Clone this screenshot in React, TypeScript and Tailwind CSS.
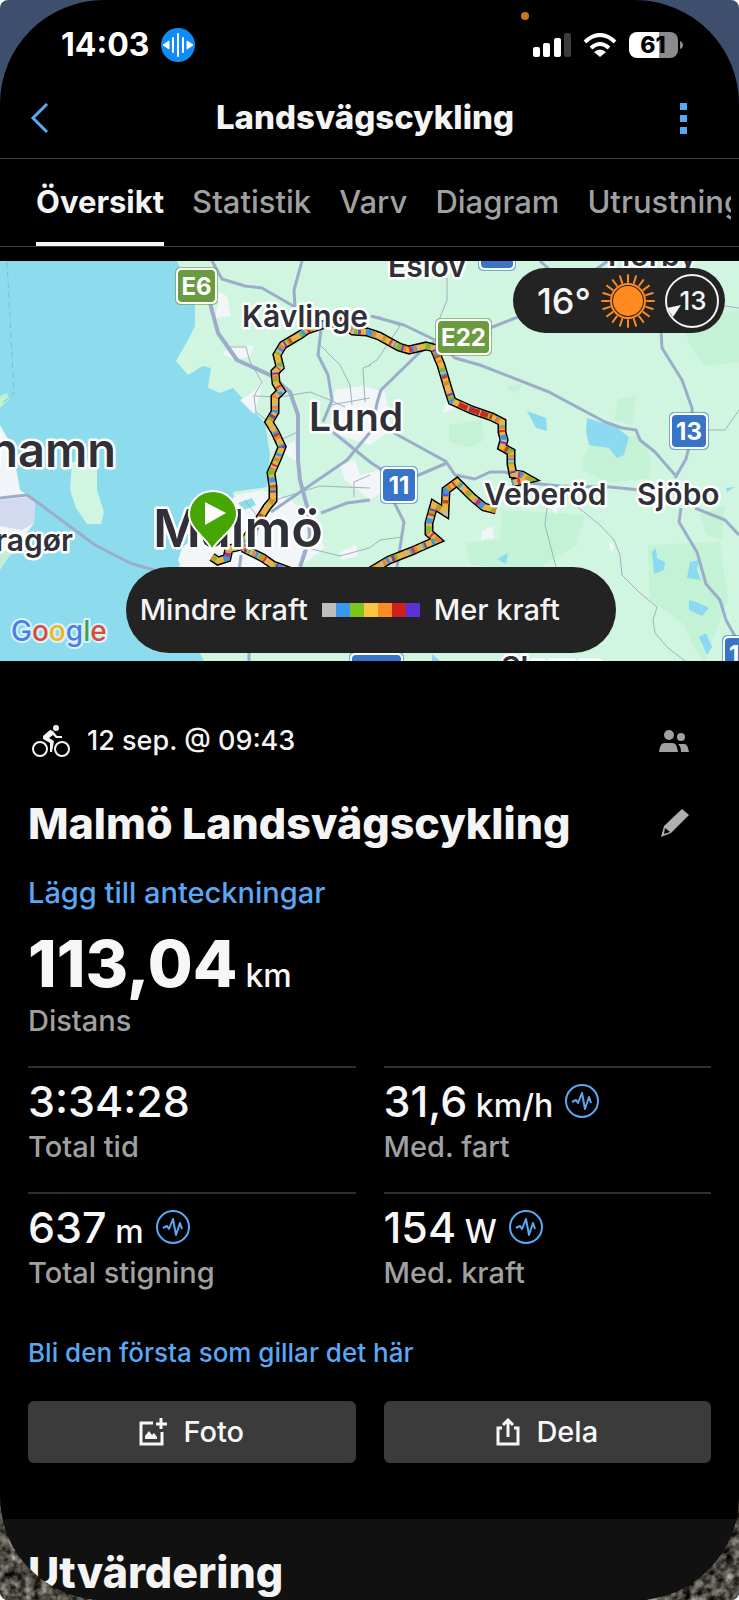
import type { ReactNode } from "react";

const ROUTE =
  "M212 557L218 561L227 558L229 549L241 546L262 515L267 507L273 500L273 487L271 473L278 457L282 447L275 432L269 422L275 412L275 397L281 391L276 383L275 372L280 367L277 355L283 345L300 335L307 330L322 325L340 322L353 331L367 332L379 336L399 347L409 350L426 346L434 348L441 365L449 392L452 401L472 410L492 417L502 422L502 432L504 440L502 447L511 452L511 464L513 474L522 475L529 479L512 483";
const ROUTE_SOUTH =
  "M496 510L484 507L472 497L457 482L446 490L445 512L434 505L429 523L429 533L437 540L421 547L412 551L389 560L372 570L340 590L273 565L263 558L243 548";

/* Each layer paints its own dashes so the line reads as mixed power zones */
const POWER_LAYERS = [
  { color: "#e9b33d", dash: "none", offset: 0 },
  { color: "#7cba35", dash: "5 9 3 13", offset: 0 },
  { color: "#3f93e8", dash: "3 17 6 23", offset: 7 },
  { color: "#f07f2a", dash: "3 8 2 21", offset: 11 },
  { color: "#d6352c", dash: "2 19 3 31", offset: 3 },
  { color: "#c3b8ae", dash: "2 15 2 24", offset: 19 },
  { color: "#6a3fd0", dash: "2 33 2 45", offset: 15 },
];

const TABS = ["Översikt", "Statistik", "Varv", "Diagram", "Utrustning"];

const LEGEND = ["bg-[#bdbdc0]", "bg-[#3b97ee]", "bg-[#7bc51c]", "bg-[#fbc63f]", "bg-[#fb8b24]", "bg-[#cf2020]", "bg-[#5c30d2]"];

interface ShieldProps {
  x: number;
  y: number;
  w: number;
  h: number;
  label: string;
  fill?: string;
}

function Shield({ x, y, w, h, label, fill = "#3874c8" }: ShieldProps) {
  return (
    <g>
      <rect x={x - 1} y={y - 1} width={w + 2} height={h + 2} rx="5" fill={fill} opacity="0.6" />
      <rect x={x} y={y} width={w} height={h} rx="5" fill="#fff" />
      <rect x={x + 2} y={y + 2} width={w - 4} height={h - 4} rx="4" fill={fill} />
      <text x={x + w / 2} y={y + h / 2 + 9} textAnchor="middle" fontSize="24" fontWeight="700" fill="#fff">
        {label}
      </text>
    </g>
  );
}

function RouteMap() {
  return (
    <svg
      viewBox="0 261 739 400"
      preserveAspectRatio="xMidYMid slice"
      className="block h-[400px] w-full"
      role="img"
      aria-label="Karta över rutten"
    >
      <rect y="261" width="739" height="400" fill="#8ddced" />

      {/* Land */}
      <path
        d="M177 261L195 300L195 326L188 340L176 361L188 375L203 366L211 368L208 388L220 393L233 388L265 423L270 455L267 487L233 492L236 510L205 530L190 542L180 563L165 600L200 653L204 661H739V261Z"
        fill="#d0f5e0"
      />
      <path d="M72 462L97 458L97 490L104 512L101 524L87 524L76 508L70 490Z" fill="#d0f5e0" />
      <path d="M0 396L7 393L9 399L0 408ZM0 545L20 545L8 558L0 570Z" fill="#c3f0d5" />
      <path d="M0 425L12 446L20 490L35 500L34 523L26 534L24 548L0 552Z" fill="#f1f4f8" />
      <path d="M0 500L30 497L35 502L34 523L22 530L0 526Z" fill="#d3d9ee" />
      <path d="M7 262L14 394L2 403" fill="none" stroke="#76c3d8" strokeDasharray="6 4" />

      {/* Forest */}
      <g fill="#c4f2d7">
        <path d="M582 460L590 445L640 435L652 460L648 478L610 483L583 470Z" />
        <path d="M502 510L585 515L576 545L535 570L470 565L466 543L500 540Z" />
        <path d="M648 545L720 542L728 600L704 661L690 640L685 625L650 600Z" />
        <path d="M449 425L482 420L484 440L470 447L450 442Z" />
        <path d="M680 320L739 310V362L705 366L690 345Z" />
        <path d="M617 400L636 395L632 425L615 420ZM508 386L522 384L518 393L508 391Z" />
        <path d="M700 515L725 505L722 540L706 535Z" />
      </g>

      {/* Built-up areas */}
      <g fill="#f2f6f8">
        <path d="M182 548L212 520L236 495L262 490L290 500L318 520L324 548L300 567L182 567L178 560Z" />
        <path d="M218 291L227 296L231 316L215 318L218 304ZM232 346L254 346L250 356L236 360L222 354Z" />
        <path d="M335 390L362 386L385 392L392 430L370 445L330 432Z" />
        <path d="M240 400L256 390L263 378L260 395L254 414ZM288 444L295 440L296 461L285 455Z" />
        <path d="M442 413L450 396L466 402L452 410ZM482 531L492 526L494 538L481 540Z" />
        <path d="M340 466L355 460L360 475L380 470L382 492L370 500L345 480Z" />
        <path d="M340 552L356 545L358 556L342 560ZM548 505L560 505L556 514ZM608 541L614 545L612 553Z" />
      </g>
      <path d="M238 503L252 498L256 505L244 510Z" fill="#8ddced" />

      {/* Lakes */}
      <g fill="#8bdaf2">
        <path d="M527 411L546 418L547 431L536 428Z" />
        <path d="M587 418L616 427L629 437L624 455L617 458L609 448L589 445L586 432Z" />
        <path d="M656 548L657 558L665 562L664 570L654 574L652 552Z" />
        <path d="M690 562L699 560L697 570L701 580L687 578Z" />
        <path d="M689 600L699 603L709 608L702 616L689 610Z" />
        <path d="M699 637L706 633L712 647L707 655Z" />
        <path d="M497 559L508 553L506 564ZM432 654L440 661H432ZM726 488L735 487L727 492Z" />
      </g>

      {/* Minor roads */}
      <g fill="none" stroke="#a3b0bf" strokeWidth="1">
        <path d="M230 347L246 347L250 362L262 382L254 396L256 412L266 420M254 396L280 397L310 392L330 400L345 407" />
        <path d="M320 345L340 365L350 385L352 405M371 365L363 368L365 402M330 405L370 398" />
        <path d="M447 278L447 300L439 320M378 316L400 326L377 360L369 365" />
        <path d="M547 508L545 525L556 567M575 505L600 525L614 540L620 555L622 575L640 593L657 607L653 620L655 633L668 648L685 661" />
        <path d="M700 430L725 430L739 410M725 306L739 308M369 548L380 540L402 537M275 500L320 486L370 488" />
        <path d="M354 497L354 482L370 475M280 440L298 432M308 548L340 556L369 548M245 500L260 520L255 545" />
      </g>

      {/* Main roads */}
      <g fill="none" stroke="#9badca" strokeWidth="3" strokeLinejoin="round">
        <path d="M212 261L222 279L245 286L262 288L295 307M302 261L294 290L295 307" />
        <path d="M210 303L218 333L237 360L270 375L290 392L298 415L298 460L300 480L308 510L310 537L300 567" strokeWidth="4" />
        <path d="M321 330L318 355L328 375L332 400L323 422" />
        <path d="M271 512L347 460L372 430L377 403L381 390L420 352L434 342" />
        <path d="M333 432L370 462L385 472M394 433L447 462" />
        <path d="M371 316L404 325L435 340L455 358L480 365L549 392L605 422L622 428L636 430L640 440L655 452L675 475" />
        <path d="M661 330L662 348L682 380L692 408L693 430L686 459L675 478" />
        <path d="M400 483L447 463L455 475L475 479L490 472L505 472L530 483L560 486L610 487L640 490" />
        <path d="M321 513L347 503L370 500M393 500L404 522L397 567" />
        <path d="M681 508L679 522L697 552L706 584L720 600L726 620L737 640M695 508L725 520L739 535" />
        <path d="M490 328L518 317M540 261L550 270M592 272L608 261" />
        <path d="M0 498L27 495L37 502L95 545L130 563L160 572M241 555L238 580M249 650L249 661" />
      </g>

      {/* Recorded route */}
      {[ROUTE, ROUTE_SOUTH].map((d) => (
        <g key={d} fill="none" strokeLinejoin="miter" strokeMiterlimit="3">
          <path d={d} stroke="#000" strokeWidth="9" />
          {POWER_LAYERS.map((layer) => (
            <path
              key={layer.color}
              d={d}
              stroke={layer.color}
              strokeWidth="6"
              strokeDasharray={layer.dash}
              strokeDashoffset={layer.offset}
            />
          ))}
        </g>
      ))}
      <path d="M460 405L472 410L492 417" fill="none" stroke="#c92820" strokeWidth="5" strokeDasharray="8 2 11 1" />

      {/* Place names */}
      <g fill="#303138" stroke="#fff" strokeWidth="5" strokeLinejoin="round" paintOrder="stroke" fontWeight="600" fontSize="30">
        <text x="242" y="327">Kävlinge</text>
        <text x="388" y="277">Eslöv</text>
        <text x="608" y="266">Hörby</text>
        <text x="484" y="505">Veberöd</text>
        <text x="637" y="505">Sjöbo</text>
        <text x="501" y="678">Skurup</text>
        <text x="73" y="551" textAnchor="end">Dragør</text>
        <text x="309" y="431" fontSize="39">Lund</text>
        <text x="116" y="467" fontSize="47" textAnchor="end">hamn</text>
        <text x="153" y="547" fontSize="52">Malmö</text>
      </g>

      <Shield x={176} y={268} w={41} h={36} label="E6" fill="#6a9b41" />
      <Shield x={436} y={319} w={55} h={36} label="E22" fill="#6a9b41" />
      <Shield x={670} y={413} w={38} h={36} label="13" />
      <Shield x={381} y={467} w={36} h={36} label="11" />
      <Shield x={479} y={234} w={36} h={36} label="17" />
      <Shield x={350} y={653} w={53} h={36} label="108" />
      <Shield x={723} y={636} w={38} h={36} label="19" />

      {/* Start marker */}
      <path
        d="M212 550C208 539 189 529 189 514A24 23 0 0 1 237 514C237 529 217 539 212 550Z"
        fill="#46a704"
        stroke="#fff"
        strokeWidth="2"
      />
      <path d="M205 502L226 513L205 525Z" fill="#fff" />

      {/* Map provider */}
      <text
        x="11"
        y="641"
        fontSize="28"
        fontWeight="500"
        stroke="#d9f3f9"
        strokeWidth="4"
        strokeLinejoin="round"
        paintOrder="stroke"
      >
        <tspan fill="#4a7fea">G</tspan>
        <tspan fill="#dc4a3e">o</tspan>
        <tspan fill="#f0b51f">o</tspan>
        <tspan fill="#4a7fea">g</tspan>
        <tspan fill="#38a455">l</tspan>
        <tspan fill="#dc4a3e">e</tspan>
      </text>
    </svg>
  );
}

function SunIcon() {
  const rays = Array.from({ length: 20 }, (_, i) => i * 18);
  return (
    <svg width="54" height="54" viewBox="-27 -27 54 54" aria-hidden="true">
      <circle r="15" fill="#ff8a1f" />
      <circle r="17" fill="none" stroke="#ff8a1f" strokeWidth="2" />
      {rays.map((deg) => (
        <path key={deg} d="M0 -19V-26" stroke="#ff8a1f" strokeWidth="2" strokeLinecap="round" transform={`rotate(${deg})`} />
      ))}
    </svg>
  );
}

function WindIcon() {
  return (
    <svg width="54" height="54" viewBox="0 0 54 54" aria-label="Vind 13">
      <circle cx="27" cy="27" r="26" fill="none" stroke="#f4f4f4" strokeWidth="2" />
      <path d="M2 34L16 31L8 43Z" fill="#f4f4f4" />
      <text x="28" y="36" textAnchor="middle" fontSize="26" fontWeight="500" fill="#f4f4f4">
        13
      </text>
    </svg>
  );
}

function BikeIcon() {
  return (
    <svg width="38" height="34" viewBox="0 0 38 34" fill="none" stroke="#f4f4f4" aria-hidden="true">
      <circle cx="8" cy="25" r="7" strokeWidth="2" />
      <circle cx="30" cy="25" r="7" strokeWidth="2" />
      <circle cx="24" cy="4" r="3" fill="#f4f4f4" stroke="none" />
      <path d="M18 6L11 12L11 15L18 19V28H20L22 17L17 14L21 11L24 14H30V12H25L21 7Z" fill="#f4f4f4" stroke="none" />
    </svg>
  );
}

function InsightIcon() {
  return (
    <svg width="34" height="34" viewBox="0 0 34 34" fill="none" stroke="#5aa7f4" strokeWidth="2" aria-hidden="true">
      <circle cx="17" cy="17" r="16" />
      <path d="M7 18L11 16L13 19L17 9L20 25L24 13L26 19" strokeLinejoin="round" />
    </svg>
  );
}

interface StatProps {
  value: string;
  unit?: string;
  label: string;
  insight?: boolean;
}

function Stat({ value, unit, label, insight }: StatProps) {
  return (
    <div className="border-t-2 border-[#303030] pt-[9px] pb-[27px]">
      <div className="flex h-12 items-center gap-3">
        <p className="text-[43px] leading-[48px] font-medium text-[#f7f7f7]">
          {value}
          {unit && <span className="text-[32px] leading-none"> {unit}</span>}
        </p>
        {insight && <InsightIcon />}
      </div>
      <p className="mt-1 text-[29px] leading-9 font-medium text-[#a0a0a0]">{label}</p>
    </div>
  );
}

function ActionButton({ icon, children }: { icon: ReactNode; children: ReactNode }) {
  return (
    <button
      type="button"
      className="flex h-[62px] items-center justify-center gap-4 rounded-md bg-[#3b3b3b] text-[29px] font-medium text-[#f7f7f7]"
    >
      {icon}
      {children}
    </button>
  );
}

function StatusBar() {
  return (
    <div className="relative flex h-[78px] items-center justify-between pt-[11px] pr-[56px] pl-[61px]">
      <div className="flex items-center gap-3">
        <span className="text-[32px] font-bold text-white">14:03</span>
        <svg width="34" height="34" viewBox="0 0 34 34" aria-hidden="true">
          <circle cx="17" cy="17" r="17" fill="#0f8cf8" />
          <path d="M17 6V28M12 10V24M22 10V24" stroke="#fff" strokeWidth="2" strokeLinecap="round" />
          <path d="M2 17L8 13V21ZM32 17L26 13V21Z" fill="#fff" stroke="#fff" strokeLinejoin="round" />
        </svg>
      </div>
      <span className="absolute top-3 left-[71%] size-2 -translate-x-1 rounded-full bg-[#c97528]" />
      <div className="flex items-center gap-3">
        <svg width="38" height="24" viewBox="0 0 38 24" fill="#fff" aria-hidden="true">
          <rect y="14" width="7" height="10" rx="2" />
          <rect x="10" y="10" width="7" height="14" rx="2" />
          <rect x="21" y="5" width="7" height="19" rx="2" />
          <rect x="31" width="7" height="24" rx="2" fill="#3b3b3b" />
        </svg>
        <svg width="34" height="24" viewBox="0 0 34 24" fill="none" stroke="#fff" strokeWidth="4" aria-hidden="true">
          <path d="M2 9Q17 -5 32 9" />
          <path d="M8 15Q17 7 26 15" />
          <path d="M17 24L11 19Q17 14 23 19Z" fill="#fff" stroke="none" />
        </svg>
        <svg width="54" height="26" viewBox="0 0 54 26" aria-label="Batteri 61 %">
          <path d="M30 0H41A8 8 0 0 1 49 8V18A8 8 0 0 1 41 26H30Z" fill="#8b8b8b" />
          <path d="M30 0H8A8 8 0 0 0 0 8V18A8 8 0 0 0 8 26H30Z" fill="#fff" />
          <path d="M51 9Q54 10 54 13T51 17Z" fill="#8b8b8b" />
          <text x="24" y="21" textAnchor="middle" fontSize="23" fontWeight="800" fill="#000">
            61
          </text>
        </svg>
      </div>
    </div>
  );
}

export default function App() {
  return (
    <div className="bg-white font-[Inter,sans-serif]">
      <div className="relative min-h-screen overflow-hidden rounded-lg bg-[#3e4f6e]">
        {/* Gravel wallpaper behind the lower corners */}
        <svg className="absolute bottom-0 left-0 h-[170px] w-full" aria-hidden="true">
          <filter id="gravel" colorInterpolationFilters="sRGB">
            <feTurbulence type="fractalNoise" baseFrequency="0.12" numOctaves="3" seed="4" />
            <feColorMatrix values="1 0 0 0 -0.2  1 0 0 0 -0.21  1 0 0 0 -0.24  0 0 0 0 1" />
          </filter>
          <rect width="100%" height="100%" filter="url(#gravel)" />
        </svg>

        <div className="relative flex min-h-screen flex-col overflow-hidden rounded-[104px] bg-black">
          <StatusBar />

          <header className="flex h-[81px] items-center justify-between border-b border-[#3c3c3c] pr-[52px] pl-[30px]">
            <button type="button" aria-label="Tillbaka">
              <svg width="20" height="30" viewBox="0 0 20 30" fill="none" stroke="#5aa7f4" strokeWidth="3">
                <path d="M17 1L3 15L17 29" />
              </svg>
            </button>
            <h1 className="text-[33px] font-extrabold text-[#f4f4f4]">Landsvägscykling</h1>
            <button type="button" aria-label="Fler alternativ" className="flex flex-col gap-[5px]">
              <span className="size-[7px] bg-[#5aa7f4]" />
              <span className="size-[7px] bg-[#5aa7f4]" />
              <span className="size-[7px] bg-[#5aa7f4]" />
            </button>
          </header>

          <nav className="border-b border-[#3c3c3c] pr-2 pl-9">
            <div className="flex h-[87px] gap-7 overflow-hidden">
              {TABS.map((tab, index) => (
                <a
                  key={tab}
                  href="#"
                  className={
                    index === 0
                      ? "flex shrink-0 items-center border-b-4 border-[#f4f4f4] pt-1 text-[31px] font-bold text-[#f4f4f4]"
                      : "flex shrink-0 items-center border-b-4 border-transparent pt-1 text-[31px] font-medium text-[#a0a0a0]"
                  }
                >
                  {tab}
                </a>
              ))}
            </div>
          </nav>

          <section className="relative mt-[14px]">
            <RouteMap />
            <div className="absolute top-[7px] right-[14px] flex h-[65px] items-center rounded-full bg-[#232323] pr-[6px] pl-6 text-[#f4f4f4]">
              <span className="text-[36px] font-medium">16°</span>
              <span className="mr-[10px] ml-[10px]">
                <SunIcon />
              </span>
              <WindIcon />
            </div>
            <div className="absolute bottom-2 left-[17%] flex h-[86px] items-center gap-[14px] rounded-full bg-[#232323] pr-[56px] pl-[14px] text-[29px] font-medium text-[#f4f4f4]">
              <span>Mindre kraft</span>
              <span className="flex">
                {LEGEND.map((color) => (
                  <span key={color} className={`h-[14px] w-[14px] ${color}`} />
                ))}
              </span>
              <span>Mer kraft</span>
            </div>
          </section>

          <main className="px-7">
            <div className="mt-14 flex h-12 items-center pr-[22px] pl-1">
              <BikeIcon />
              <p className="ml-[17px] flex-1 text-[27px] font-medium text-[#f4f4f4]">12 sep. @ 09:43</p>
              <svg width="30" height="22" viewBox="0 0 30 22" fill="#a0a0a0" aria-hidden="true">
                <circle cx="10" cy="5" r="5" />
                <circle cx="22" cy="7" r="4" />
                <path d="M0 22C1 16 2 13 6 13H13C17 13 18 16 19 22ZM19 14H25C28 14 29 17 30 22H22C22 18 21 16 19 14Z" />
              </svg>
            </div>

            <div className="mt-[34px] flex h-12 items-center justify-between pr-[22px]">
              <h2 className="text-[43px] leading-[48px] font-extrabold text-[#f4f4f4]">Malmö Landsvägscykling</h2>
              <button type="button" aria-label="Redigera namn">
                <svg width="28" height="28" viewBox="0 0 28 28" fill="#b0b0b0">
                  <path d="M0 28L3 17L21 0L28 6L10 24ZM4 19L3 25L9 23Z" fillRule="evenodd" />
                </svg>
              </button>
            </div>

            <a href="#" className="mt-7 block text-[29px] leading-9 font-medium text-[#5aa7f4]">
              Lägg till anteckningar
            </a>

            <p className="mt-[21px] text-[65px] leading-[64px] font-extrabold text-[#f7f7f7]">
              113,04<span className="ml-2 text-[32px] leading-none font-medium">km</span>
            </p>
            <p className="mt-[7px] text-[29px] leading-9 font-medium text-[#a0a0a0]">Distans</p>

            <div className="mt-[27px] grid grid-cols-2 gap-x-7">
              <Stat value="3:34:28" label="Total tid" />
              <Stat value="31,6" unit="km/h" label="Med. fart" insight />
              <Stat value="637" unit="m" label="Total stigning" insight />
              <Stat value="154" unit="W" label="Med. kraft" insight />
            </div>

            <a href="#" className="mt-[17px] block text-[26px] leading-9 font-medium text-[#5aa7f4]">
              Bli den första som gillar det här
            </a>

            <div className="mt-[30px] grid grid-cols-2 gap-x-7">
              <ActionButton
                icon={
                  <svg width="28" height="28" viewBox="0 0 28 28" fill="none" stroke="#f7f7f7" strokeWidth="3" aria-hidden="true">
                    <path d="M14 5H2V26H23V14" />
                    <path d="M22 0V11M17 6H28" />
                    <path d="M6 21V18L10 13L13 17L15 15L18 19V21Z" fill="#f7f7f7" stroke="none" />
                  </svg>
                }
              >
                Foto
              </ActionButton>
              <ActionButton
                icon={
                  <svg width="24" height="28" viewBox="0 0 24 28" fill="none" stroke="#f7f7f7" strokeWidth="3" aria-hidden="true">
                    <path d="M6 10H2V26H22V10H18" />
                    <path d="M12 19V3M7 7L12 2L17 7" />
                  </svg>
                }
              >
                Dela
              </ActionButton>
            </div>
          </main>

          <section className="mt-14 flex-1 bg-[#111111] px-7 pt-[29px] pb-1">
            <h2 className="text-[43px] leading-[48px] font-extrabold text-[#f4f4f4]">Utvärdering</h2>
          </section>
        </div>
      </div>
    </div>
  );
}
